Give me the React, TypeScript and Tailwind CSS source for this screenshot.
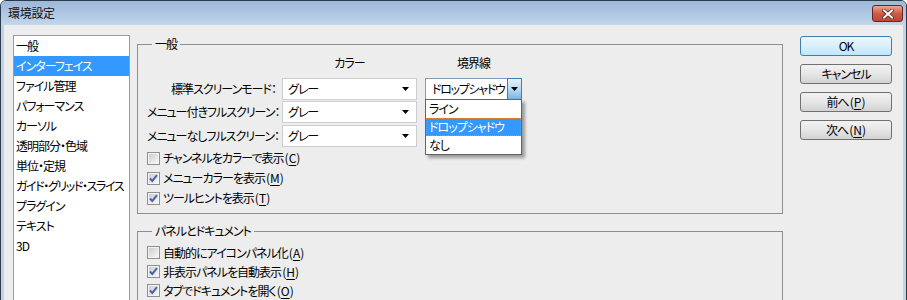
import React from 'react';

const categories = [
  '一般',
  'インターフェイス',
  'ファイル管理',
  'パフォーマンス',
  'カーソル',
  '透明部分・色域',
  '単位・定規',
  'ガイド・グリッド・スライス',
  'プラグイン',
  'テキスト',
  '3D',
];

// label text + "(X)" with the access key underlined
const Accel = ({ text, k }: { text: string; k: string }) => (
  <span className="whitespace-nowrap">
    {text}
    <span className="tracking-normal ml-[1px]">
      (<span className="underline underline-offset-[2px]">{k}</span>)
    </span>
  </span>
);

const CheckBox = ({ checked, children }: { checked: boolean; children: React.ReactNode }) => (
  <div className="flex items-center gap-[3px]">
    <span className="relative w-[13px] h-[13px] border border-[#8e8f8f] bg-[#f4f4f4] p-[1px] flex shrink-0">
      <span className="flex-1 bg-gradient-to-br from-[#c9ccd1] to-[#f7f7f7]" />
      {checked && (
        <svg className="absolute left-0 top-0" width="11" height="11" viewBox="0 0 11 11">
          <path d="M2 5.5 L4.3 8 L9 2.2" fill="none" stroke="#4d64a3" strokeWidth="2" />
        </svg>
      )}
    </span>
    <span className="leading-[14px]">{children}</span>
  </div>
);

const Arrow = () => (
  <svg width="7" height="4" viewBox="0 0 7 4">
    <path d="M0 0 H7 L3.5 4 Z" fill="#000" />
  </svg>
);

const Combo = ({ value, w }: { value: string; w: string }) => (
  <div className={`${w} h-[22px] bg-white border border-[#cdcdcd] flex items-center pl-[5px] pr-[7px]`}>
    <span className="flex-1 leading-[14px] whitespace-nowrap">{value}</span>
    <Arrow />
  </div>
);

const Button = ({ children, primary }: { children: React.ReactNode; primary?: boolean }) => (
  <div
    className={
      primary
        ? 'h-[20px] rounded-[3px] border border-[#3c7fb1] bg-gradient-to-b from-[#eaf6fd] via-[#d9f0fc] to-[#bee6fd] flex items-center justify-center leading-[14px]'
        : 'h-[20px] rounded-[3px] border border-[#707070] bg-gradient-to-b from-[#f2f2f2] via-[#e6e6e6] to-[#d2d2d2] flex items-center justify-center leading-[14px]'
    }
  >
    {children}
  </div>
);

export default function App() {
  return (
    <div className="w-[907px] h-[300px] overflow-hidden bg-white font-['Noto_Sans_CJK_JP','Noto_Sans',sans-serif] [font-feature-settings:'palt'] text-[12px] tracking-[-1px] text-black">
      <div className="w-[907px] h-[320px] border border-[#2d3a48] rounded-t-[6px] overflow-hidden flex flex-col bg-[#bfd4eb]">
        {/* title bar */}
        <div className="h-[24px] shrink-0 bg-gradient-to-b from-[#9cb8d8] to-[#c2d6ec] flex items-start pl-[7px] pr-[3px]">
          <span className="mt-[5px] leading-[14px] text-[12px] tracking-[-0.3px] text-[#111]">環境設定</span>
          <div className="ml-auto mt-[4px] w-[31px] h-[17px] rounded-[3px] border border-[#5e2a22] bg-gradient-to-b from-[#e8a797] via-[#cf5b48] to-[#c0452f] flex items-center justify-center">
            <svg width="12" height="10" viewBox="0 0 12 10">
              <path d="M2 1.5 L10 8.5 M10 1.5 L2 8.5" stroke="#5a2418" strokeWidth="3.6" strokeLinecap="square" />
              <path d="M2 1.5 L10 8.5 M10 1.5 L2 8.5" stroke="#fff" strokeWidth="2" strokeLinecap="square" />
            </svg>
          </div>
        </div>

        {/* client */}
        <div className="flex-1 px-[3px] flex">
          <div className="flex-1 bg-[#ededed] flex pt-[10px] pl-[9px]">
            {/* category list */}
            <div className="w-[117px] h-[300px] shrink-0 bg-white border border-[#9c9c9c]">
              {categories.map((c) => (
                <div
                  key={c}
                  className={
                    c === 'インターフェイス'
                      ? 'h-[20px] pl-[2px] flex items-center leading-[14px] whitespace-nowrap bg-[#3399ff] text-white'
                      : c.length > 10
                        ? 'h-[20px] pl-[2px] flex items-center leading-[14px] whitespace-nowrap tracking-[-1.4px]'
                        : 'h-[20px] pl-[2px] flex items-center leading-[14px] whitespace-nowrap'
                  }
                >
                  {c}
                </div>
              ))}
            </div>

            {/* settings */}
            <div className="ml-[7px] w-[646px] shrink-0 flex flex-col">
              <fieldset className="mt-[2px] h-[177px] border border-[#8f8f8f]">
                <legend className="ml-[14px] px-[3px] leading-[14px]">一般</legend>
                <div className="pl-[9px] flex flex-col">
                  <div className="mt-[4px] h-[16px] flex items-center leading-[14px]">
                    <span className="w-[129px]" />
                    <span className="ml-[6px] w-[135px] text-center">カラー</span>
                    <span className="ml-[8px] w-[97px] text-center">境界線</span>
                  </div>

                  <div className="mt-[7px] h-[22px] flex items-center">
                    <span className="w-[129px] text-right leading-[14px] whitespace-nowrap">標準スクリーンモード：</span>
                    <div className="ml-[6px]">
                      <Combo value="グレー" w="w-[135px]" />
                    </div>
                    <div className="ml-[8px] relative">
                      <div className="w-[97px] h-[22px] bg-white border border-[#7f9db9] flex">
                        <span className="flex-1 pl-[6px] flex items-center leading-[14px] whitespace-nowrap tracking-[-1.3px]">ドロップシャドウ</span>
                        <span className="w-[15px] -my-[1px] -mr-[1px] border border-[#3c7fb1] bg-gradient-to-b from-[#e6f2fb] via-[#b8dbf3] to-[#77b5e4] flex items-center justify-center">
                          <Arrow />
                        </span>
                      </div>
                      {/* open drop-down list */}
                      <div className="absolute left-0 top-[21px] w-[97px] z-10 bg-white border border-[#646464] shadow-[3px_3px_3px_rgba(0,0,0,0.35)]">
                        <div className="h-[18px] pl-[3px] flex items-center leading-[14px]">ライン</div>
                        <div className="h-[18px] pl-[2px] flex items-center leading-[14px] whitespace-nowrap bg-[#3399ff] text-white border border-dotted border-[#e0893a]">
                          ドロップシャドウ
                        </div>
                        <div className="h-[18px] pl-[3px] flex items-center leading-[14px]">なし</div>
                      </div>
                    </div>
                  </div>

                  <div className="mt-[1px] h-[22px] flex items-center">
                    <span className="w-[129px] text-right leading-[14px] whitespace-nowrap">メニュー付きフルスクリーン：</span>
                    <div className="ml-[6px]">
                      <Combo value="グレー" w="w-[135px]" />
                    </div>
                  </div>

                  <div className="mt-[2px] h-[22px] flex items-center">
                    <span className="w-[129px] text-right leading-[14px] whitespace-nowrap">メニューなしフルスクリーン：</span>
                    <div className="ml-[6px]">
                      <Combo value="グレー" w="w-[135px]" />
                    </div>
                  </div>

                  <div className="mt-[1px] flex flex-col">
                    <div className="h-[20px] flex items-center">
                      <CheckBox checked={false}>
                        <Accel text="チャンネルをカラーで表示" k="C" />
                      </CheckBox>
                    </div>
                    <div className="h-[20px] flex items-center">
                      <CheckBox checked>
                        <Accel text="メニューカラーを表示" k="M" />
                      </CheckBox>
                    </div>
                    <div className="h-[20px] flex items-center">
                      <CheckBox checked>
                        <Accel text="ツールヒントを表示" k="T" />
                      </CheckBox>
                    </div>
                  </div>
                </div>
              </fieldset>

              <fieldset className="mt-[10px] h-[120px] border border-[#8f8f8f]">
                <legend className="ml-[14px] px-[3px] leading-[14px]">パネルとドキュメント</legend>
                <div className="pl-[9px] mt-[5px] flex flex-col">
                  <div className="h-[19px] flex items-center">
                    <CheckBox checked={false}>
                      <Accel text="自動的にアイコンパネル化" k="A" />
                    </CheckBox>
                  </div>
                  <div className="h-[19px] flex items-center">
                    <CheckBox checked>
                      <Accel text="非表示パネルを自動表示" k="H" />
                    </CheckBox>
                  </div>
                  <div className="h-[19px] flex items-center">
                    <CheckBox checked>
                      <Accel text="タブでドキュメントを開く" k="O" />
                    </CheckBox>
                  </div>
                </div>
              </fieldset>
            </div>

            {/* buttons */}
            <div className="ml-[17px] mt-[1px] w-[92px] shrink-0 flex flex-col gap-[8px]">
              <Button primary>OK</Button>
              <Button>キャンセル</Button>
              <Button>
                <Accel text="前へ" k="P" />
              </Button>
              <Button>
                <Accel text="次へ" k="N" />
              </Button>
            </div>
          </div>
        </div>
      </div>
    </div>
  );
}
